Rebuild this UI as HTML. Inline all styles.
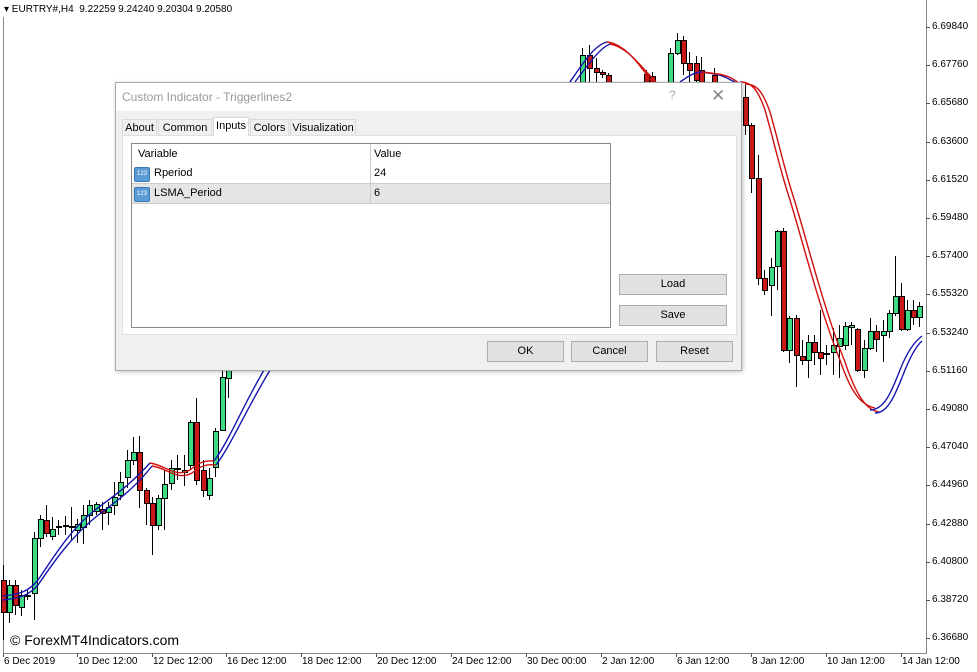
<!DOCTYPE html>
<html><head><meta charset="utf-8"><style>
body{margin:0;width:977px;height:672px;background:#fff;overflow:hidden;font-family:"Liberation Sans",sans-serif;position:relative}
.ax{position:absolute;font-size:10px;color:#000}
#dlg{position:absolute;left:115px;top:82px;width:625px;height:287px;background:#f0f0f0;border:1px solid #aaa;box-shadow:1px 1px 4px rgba(0,0,0,.25);font-size:11px}
#tb{height:28px;background:#fff;position:relative}
#tb span{position:absolute;left:6px;top:7px;color:#999;font-size:12px}
.tab{position:absolute;top:36px;height:17px;border:1px solid #d9d9d9;border-bottom:none;background:#f0f0f0;font-size:11px;line-height:17px;text-align:center;color:#000;box-sizing:border-box}
#panel{position:absolute;left:6px;top:52px;width:613px;height:198px;background:#fff;border:1px solid #e0e0e0}
#list{position:absolute;left:15px;top:60px;width:478px;height:183px;border:1px solid #888;background:#fff}
.row{position:absolute;left:0;width:478px;height:19px;font-size:11px;line-height:19px}
.btn{position:absolute;background:#e1e1e1;border:1px solid #adadad;text-align:center;font-size:11px;line-height:19px}
.ic{position:absolute;left:2px;top:3px;width:14px;height:13px;background:#5b9bd5;border:1px solid #3a78b5;border-radius:2px;font-size:6px;color:#fff;line-height:13px;text-align:center}
</style></head><body>
<svg id="ch" width="977" height="672" style="position:absolute;left:0;top:0">
<line x1="3.5" y1="17" x2="3.5" y2="653" stroke="#888"/>
<line x1="926.5" y1="0" x2="926.5" y2="653" stroke="#888"/>
<line x1="3" y1="653.5" x2="927" y2="653.5" stroke="#888"/>
<g id="cg"></g>
<g fill="none" stroke-width="1.4">
<path d="M3,596 C20,594 28,592 38,580 C55,555 70,530 95,510 C115,495 130,485 150,463" stroke="#1515b0"/>
<path d="M3,600 C20,598 28,596 38,585 C55,560 72,536 97,516 C118,500 133,490 152,466" stroke="#1515b0"/>
<path d="M150,463 C165,465 175,478 190,470 C200,462 205,460 214,461" stroke="#d01010"/>
<path d="M152,466 C167,468 177,481 192,473 C202,465 207,464 216,465" stroke="#d01010"/>
<path d="M214,461 C230,440 245,400 270,360" stroke="#1515b0"/>
<path d="M216,465 C232,444 248,405 275,362" stroke="#1515b0"/>
<path d="M570,82 C585,60 595,45 607,42" stroke="#1515b0"/>
<path d="M575,82 C590,62 600,48 610,44" stroke="#1515b0"/>
<path d="M607,42 C625,44 640,65 652,82" stroke="#d01010"/>
<path d="M610,44 C628,47 642,68 656,82" stroke="#d01010"/>
<path d="M680,82 C690,75 695,72 702,72 L715,74 C725,76 730,80 735,82" stroke="#1515b0"/>
<path d="M702,72 L718,74 C730,76 735,80 740,84" stroke="#d01010"/>
<path d="M740,82 C752,82 758,90 765,110 C775,145 780,170 790,200 C805,250 820,310 840,360 C850,390 860,405 875,408" stroke="#d01010"/>
<path d="M745,84 C757,84 763,92 770,112 C780,147 785,172 795,202 C810,252 825,312 845,362 C855,392 865,410 879,412" stroke="#d01010"/>
<path d="M870,410 C885,410 892,390 900,370 C907,352 914,342 922,336" stroke="#1515b0"/>
<path d="M875,413 C888,413 895,395 903,375 C910,357 916,346 922,341" stroke="#1515b0"/>
</g>
</svg>
<div class="ax" style="left:4px;top:4px;font-size:10px">▾ EURTRY#,H4&nbsp; 9.22259 9.24240 9.20304 9.20580</div>
<div class="ax" style="left:10px;top:632px;font-size:14px">© ForexMT4Indicators.com</div>
<div id="yl"></div>
<div id="dlg">
<div id="tb"><span>Custom Indicator - Triggerlines2</span><span style="left:553px;top:5px;color:#aaa">?</span><span style="left:595px;top:3px;color:#888;font-size:17px">✕</span></div>
<div class="tab" style="left:6px;width:35px">About</div>
<div class="tab" style="left:42px;width:54px">Common</div>
<div class="tab" style="left:97px;top:34px;height:19px;width:36px;background:#fff;z-index:2">Inputs</div>
<div class="tab" style="left:134px;width:39px">Colors</div>
<div class="tab" style="left:174px;width:66px">Visualization</div>
<div id="panel"></div>
<div id="list">
<div class="row" style="top:0;height:20px"><span style="position:absolute;left:6px;top:1px">Variable</span><span style="position:absolute;left:242px;top:1px">Value</span></div>
<div class="row" style="top:20px"><div class="ic">123</div><span style="position:absolute;left:22px">Rperiod</span><span style="position:absolute;left:242px">24</span></div>
<div class="row" style="top:39px;background:#e5e5e5;border-top:1px solid #ccc;border-bottom:1px solid #ccc"><div class="ic">123</div><span style="position:absolute;left:22px">LSMA_Period</span><span style="position:absolute;left:242px">6</span></div>
<div style="position:absolute;left:238px;top:0;width:1px;height:59px;background:#ccc"></div>
</div>
<div class="btn" style="left:503px;top:191px;width:106px">Load</div>
<div class="btn" style="left:503px;top:222px;width:106px">Save</div>
<div class="btn" style="left:371px;top:258px;width:75px">OK</div>
<div class="btn" style="left:455px;top:258px;width:75px">Cancel</div>
<div class="btn" style="left:540px;top:258px;width:75px">Reset</div>
</div>
<script>
var C=[[3,580,612,565,640,'r'],[9,585,612,580,623,'g'],[15,585,605,580,615,'r'],[21,595,607,590,616,'g'],[27,595,596,590,600,'g'],[34,538,593,532,620,'g'],[40,519,538,515,547,'g'],[46,520,533,505,537,'r'],[52,529,536,517,540,'g'],[58,526,527,520,535,'g'],[65,525,526,516,535,'g'],[71,526,527,507,540,'g'],[77,524,530,519,543,'g'],[83,515,527,505,544,'g'],[89,505,515,500,525,'g'],[96,504,511,502,515,'g'],[102,509,513,502,530,'r'],[108,507,512,502,525,'g'],[114,497,505,482,515,'g'],[120,482,495,472,500,'g'],[127,460,477,450,488,'g'],[133,452,460,437,465,'g'],[139,452,490,436,508,'r'],[146,490,503,488,525,'r'],[152,503,525,497,555,'r'],[158,498,525,495,530,'g'],[164,484,498,470,530,'g'],[171,468,483,460,490,'g'],[177,468,469,455,480,'g'],[184,470,472,455,486,'g'],[190,422,465,420,470,'g'],[196,422,480,398,485,'r'],[203,470,490,460,497,'r'],[209,478,495,468,500,'g'],[215,431,467,428,477,'g'],[222,377,430,370,430,'g'],[228,368,378,365,398,'g'],
[582,55,82,48,82,'g'],[589,55,68,45,82,'r'],[596,68,72,58,82,'r'],[602,72,74,70,78,'r'],[608,75,82,73,82,'r'],[646,74,82,70,82,'r'],[652,76,82,72,82,'r'],[670,53,82,48,82,'g'],[677,40,53,33,55,'g'],[683,40,63,36,75,'r'],[689,63,70,52,82,'r'],[696,63,80,56,82,'r'],[701,70,82,57,82,'r'],[714,75,82,68,82,'r'],[745,97,125,85,135,'r'],[751,125,178,123,193,'r'],[758,178,278,155,285,'r'],[764,278,290,270,295,'r'],[771,267,285,258,316,'g'],[777,231,266,230,290,'g'],[783,231,350,228,352,'r'],[789,318,350,316,363,'g'],[796,318,355,315,387,'r'],[802,356,360,340,365,'r'],[808,342,360,335,378,'g'],[814,342,352,335,365,'r'],[820,352,358,310,375,'r'],[826,353,354,345,365,'g'],[833,345,352,328,375,'g'],[839,338,346,325,378,'g'],[845,326,345,322,350,'g'],[851,325,327,322,345,'g'],[857,329,370,328,372,'r'],[864,348,370,340,378,'g'],[870,331,348,318,350,'g'],[876,331,339,325,352,'r'],[883,331,335,320,362,'g'],[889,313,331,310,338,'g'],[895,296,313,256,316,'g'],[901,296,329,283,331,'r'],[907,310,329,300,331,'g'],[913,310,317,300,325,'r'],[919,306,317,302,327,'g']];
var s='';C.forEach(function(c){var x=c[0],col=c[5]=='g'?'#3ddc84':'#c81818';s+='<line x1="'+(x+.5)+'" y1="'+c[3]+'" x2="'+(x+.5)+'" y2="'+c[4]+'" stroke="#000"/>';var h=Math.max(1,c[2]-c[1]);s+='<rect x="'+(x-2)+'.5" y="'+c[1]+'.5" width="5" height="'+h+'" fill="'+col+'" stroke="#000" stroke-width="1"/>';});
document.getElementById('cg').innerHTML=s;
var v=['6.69840','6.67760','6.65680','6.63600','6.61520','6.59480','6.57400','6.55320','6.53240','6.51160','6.49080','6.47040','6.44960','6.42880','6.40800','6.38720','6.36680'],h='';
v.forEach(function(t,i){h+='<div class="ax" style="left:932px;top:'+(21+i*38.2)+'px">'+t+'</div>';});
var d=[['6 Dec 2019',3],['10 Dec 12:00',77],['12 Dec 12:00',152],['16 Dec 12:00',226],['18 Dec 12:00',301],['20 Dec 12:00',376],['24 Dec 12:00',451],['30 Dec 00:00',526],['2 Jan 12:00',601],['6 Jan 12:00',676],['8 Jan 12:00',751],['10 Jan 12:00',826],['14 Jan 12:00',901]];
d.forEach(function(t){h+='<div class="ax" style="left:'+(t[1]+1)+'px;top:656px">'+t[0]+'</div><div style="position:absolute;left:'+t[1]+'px;top:653px;width:1px;height:4px;background:#555"></div>';});
v.forEach(function(t,i){h+='<div style="position:absolute;left:926px;top:'+(27+i*38.2)+'px;width:4px;height:1px;background:#555"></div>';});
document.getElementById('yl').innerHTML=h;
</script>
</body></html>
